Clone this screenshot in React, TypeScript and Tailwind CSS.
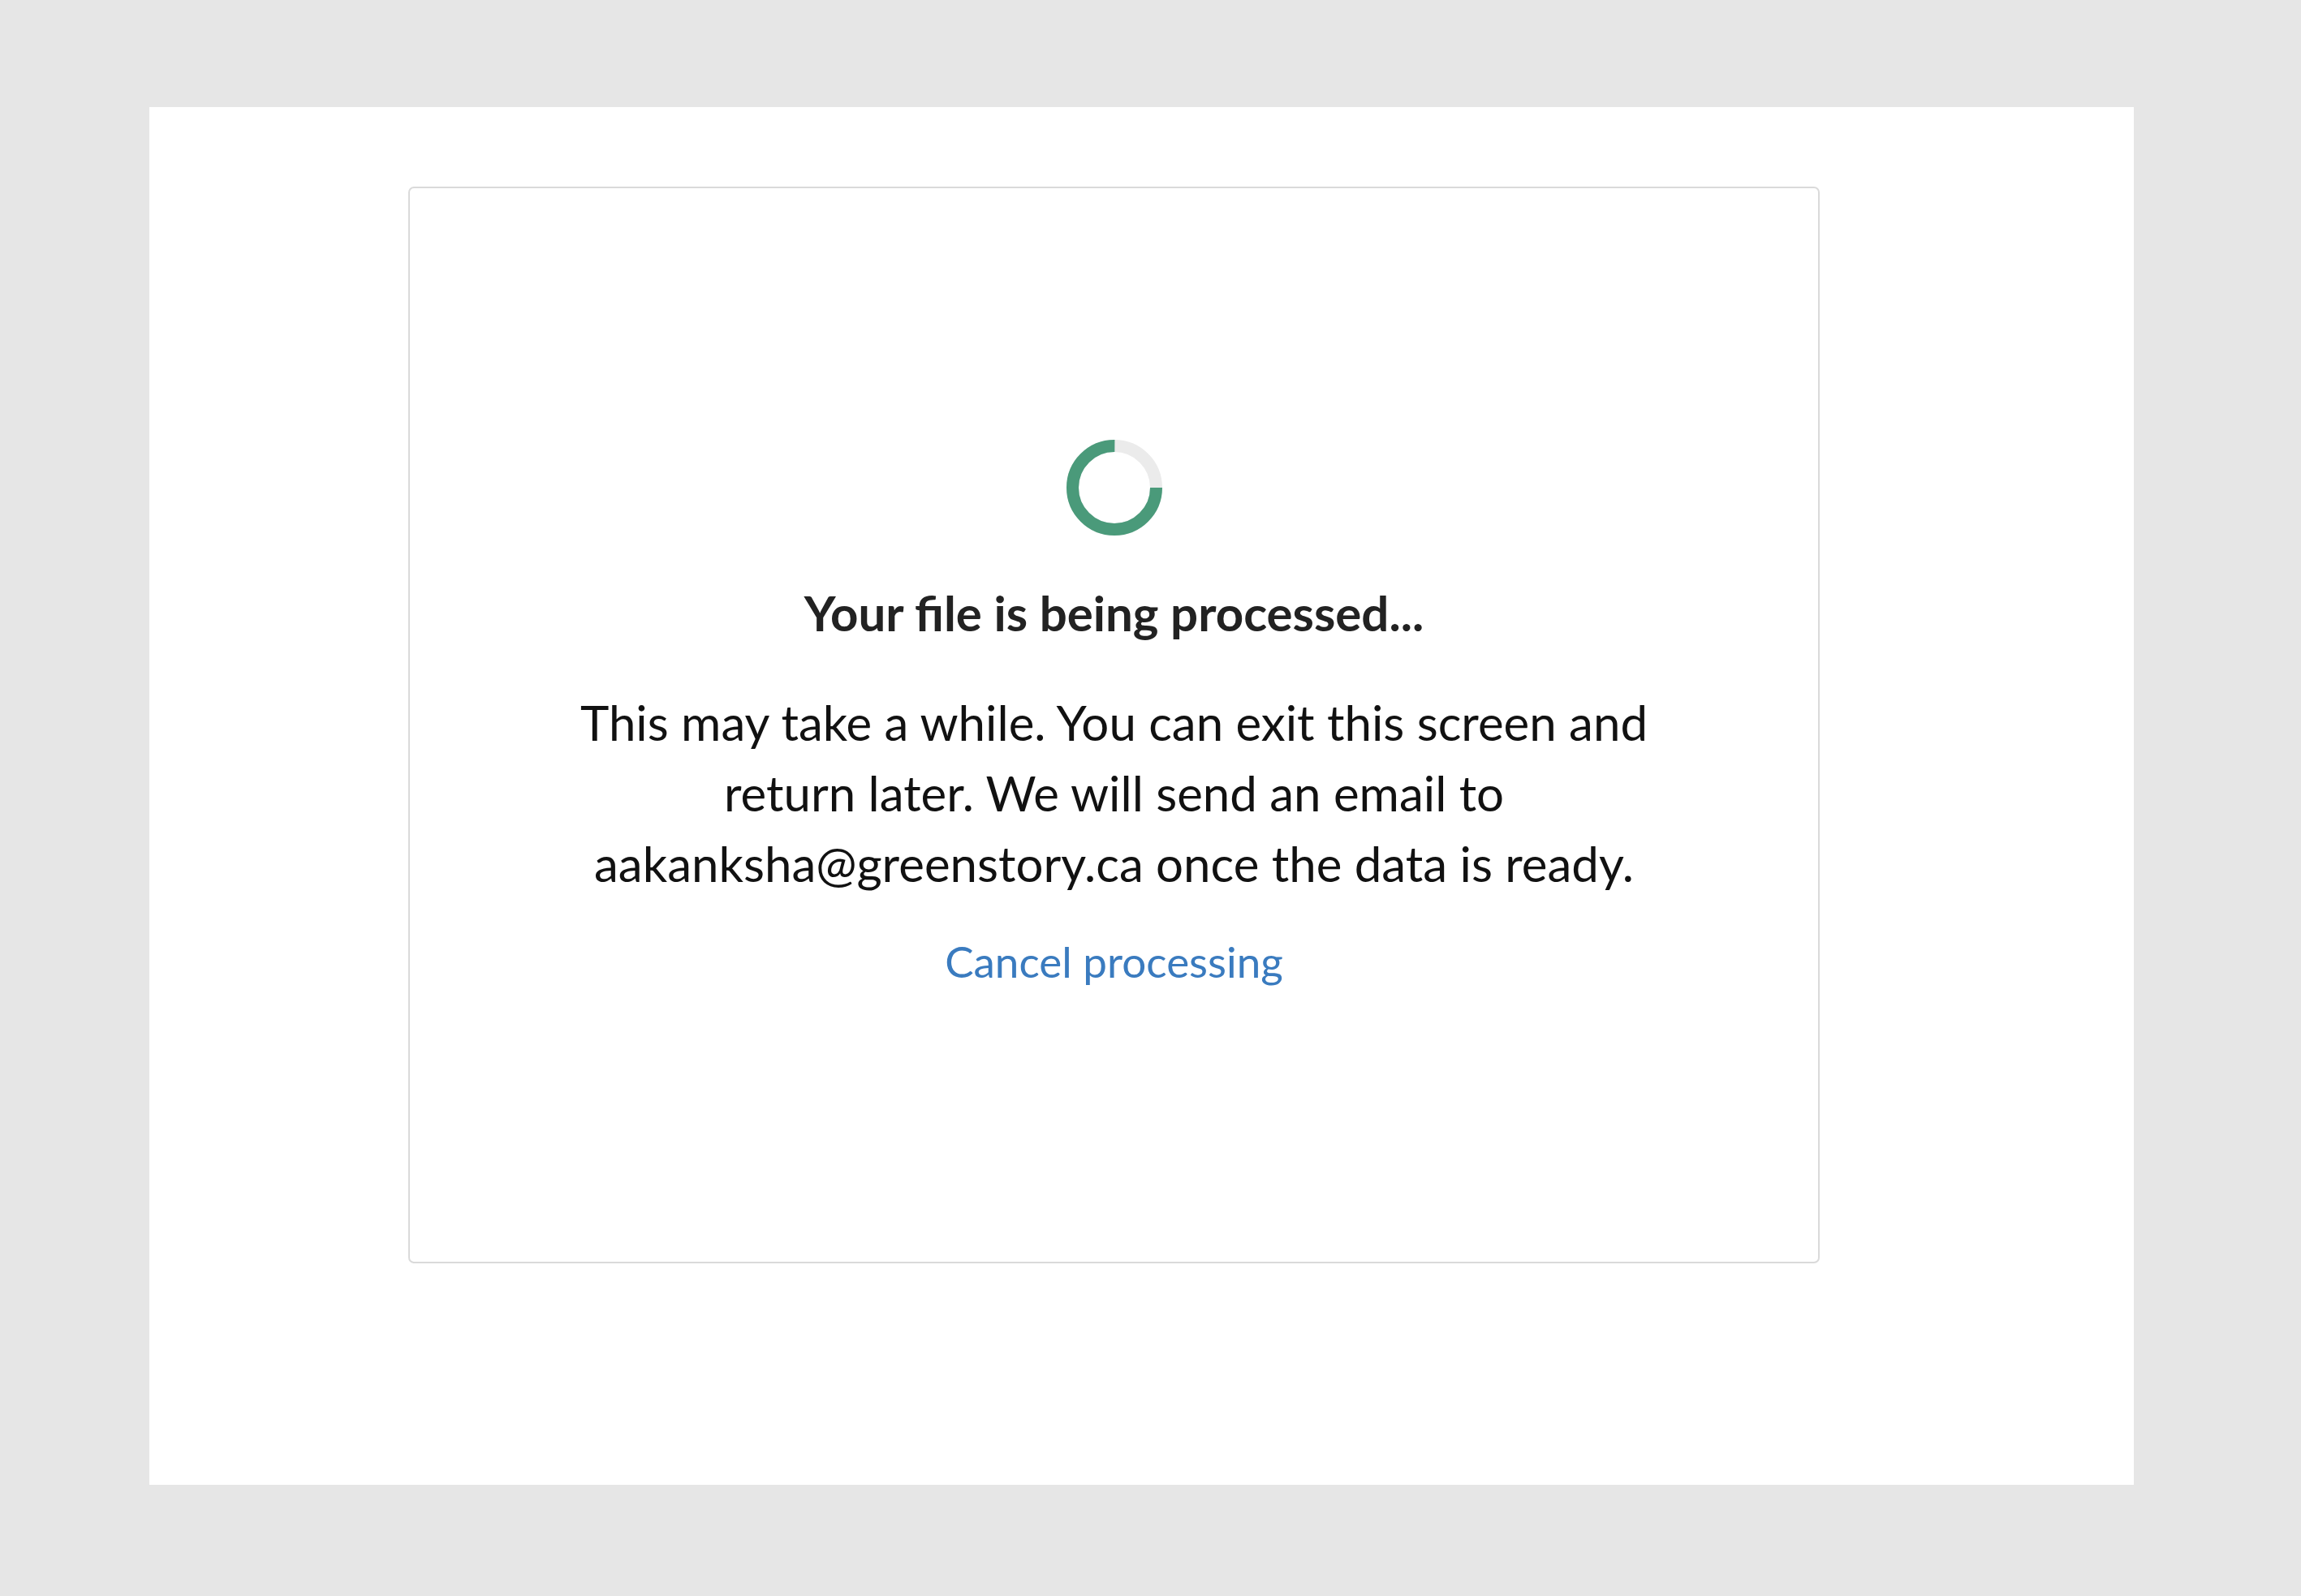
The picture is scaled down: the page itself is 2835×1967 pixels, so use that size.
import React from 'react';

function Spinner() {
  const r = 51.5;
  const c = 2 * Math.PI * r;
  return (
    <svg width="118" height="118" viewBox="0 0 118 118">
      <circle cx="59" cy="59" r={r} fill="none" stroke="#ebebeb" strokeWidth="15" />
      <circle
        cx="59"
        cy="59"
        r={r}
        fill="none"
        stroke="#4a9a7a"
        strokeWidth="15"
        strokeDasharray={`${c * 0.75} ${c}`}
      />
    </svg>
  );
}

export default function App() {
  return (
    <div className="min-h-screen bg-[#e6e6e6] pt-[132px] pl-[184px] font-['Lato',sans-serif]">
      <div className="w-[2445px] h-[1698px] bg-white pl-[319px] pt-[98px]">
        <div className="w-[1739px] h-[1327px] rounded-[7px] border-2 border-[#dadada] flex flex-col items-center pt-[310px]">
          <Spinner />
          <h1 className="mt-[65px] text-[60px] leading-none font-bold text-[#222222]">
            Your file is being processed...
          </h1>
          <p className="mt-[62px] max-w-[1420px] text-center text-[60px] leading-[87px] text-[#111111]">
            This may take a while. You can exit this screen and return later. We will send an email to aakanksha@greenstory.ca once the data is ready.
          </p>
          <a href="#" className="mt-[50px] text-[53px] leading-none text-[#3a7bbf]">
            Cancel processing
          </a>
        </div>
      </div>
    </div>
  );
}
